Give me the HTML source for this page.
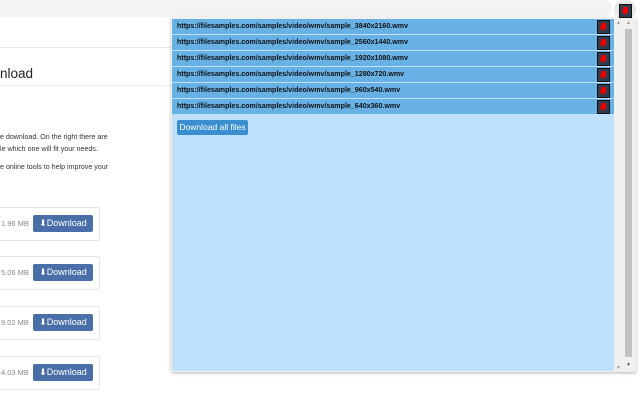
<!DOCTYPE html>
<html><head><style>
body{margin:0;width:640px;height:400px;overflow:hidden;background:#fff;font-family:"Liberation Sans",Arial,sans-serif;position:relative}
.a{position:absolute}
.ico{position:absolute;width:11px;height:12px;background:#2c3e50;border:1px solid #111}
.ico:after{content:"";position:absolute;left:3px;top:2px;width:5px;height:4px;background:#e00}
.ico:before{content:"";position:absolute;left:1px;top:6px;border-left:4.5px solid transparent;border-right:4.5px solid transparent;border-top:4px solid #e00}
.row{position:absolute;left:172px;width:442px;height:15px;background:#68b1e5;font-size:7.1px;font-weight:bold;color:#111;line-height:15px;text-indent:5px}
.box{position:absolute;left:-4px;width:102px;height:32px;border:1px solid #e6e6e6;border-radius:2px}
.sz{position:absolute;left:4px;top:11px;font-size:7.5px;color:#888}
.btn{position:absolute;left:36px;top:7px;width:60px;height:17px;background:#4a6ea8;border-radius:2px;color:#fff;font-size:9px;line-height:17px;text-align:center}
</style></head><body>
<div class="a" style="left:0;top:0;width:612px;height:17px;background:#f1f3f4;border-radius:0 9px 9px 0"></div>
<div class="a" style="left:614px;top:0;width:22px;height:19px;background:#e8e8e8;border-radius:10px"></div>
<div class="ico" style="left:619px;top:4px"></div>
<div class="a" style="left:0;top:47px;width:172px;height:1px;background:#e8e8e8"></div>
<div class="a" style="left:0;top:66px;font-size:13.5px;color:#222">nload</div>
<div class="a" style="left:0;top:85px;width:172px;height:1px;background:#eee"></div>
<div class="a" style="left:0;top:131px;font-size:7.1px;color:#333;line-height:12px">e download. On the right there are<br>le which one will fit your needs.</div>
<div class="a" style="left:0;top:163px;font-size:7.1px;color:#333">e online tools to help improve your</div>
<div class="box" style="top:207px"><span class="sz">1.96 MB</span><span class="btn">⬇Download</span></div>
<div class="box" style="top:256px"><span class="sz">5.06 MB</span><span class="btn">⬇Download</span></div>
<div class="box" style="top:306px"><span class="sz">9.02 MB</span><span class="btn">⬇Download</span></div>
<div class="box" style="top:356px"><span class="sz">4.03 MB</span><span class="btn">⬇Download</span></div>
<div class="a" style="left:171px;top:18px;width:465px;height:354px;background:#f0f0f0;box-shadow:0 1px 3px rgba(0,0,0,.3)"></div>
<div class="a" style="left:172px;top:19px;width:442px;height:352px;background:#bfe1fc"></div>
<div class="row" style="top:19px">https://filesamples.com/samples/video/wmv/sample_3840x2160.wmv</div>
<div class="row" style="top:35px">https://filesamples.com/samples/video/wmv/sample_2560x1440.wmv</div>
<div class="row" style="top:51px">https://filesamples.com/samples/video/wmv/sample_1920x1080.wmv</div>
<div class="row" style="top:67px">https://filesamples.com/samples/video/wmv/sample_1280x720.wmv</div>
<div class="row" style="top:83px">https://filesamples.com/samples/video/wmv/sample_960x540.wmv</div>
<div class="row" style="top:99px">https://filesamples.com/samples/video/wmv/sample_640x360.wmv</div>
<div class="ico" style="left:597px;top:20px"></div>
<div class="ico" style="left:597px;top:36px"></div>
<div class="ico" style="left:597px;top:52px"></div>
<div class="ico" style="left:597px;top:68px"></div>
<div class="ico" style="left:597px;top:84px"></div>
<div class="ico" style="left:597px;top:100px"></div>
<div class="a" style="left:177px;top:120px;width:71px;height:15px;background:#3a8fd1;border-radius:2px;color:#fff;font-size:8.5px;line-height:15px;text-align:center">Download all files</div>
<div class="a" style="left:625px;top:29px;width:7px;height:328px;background:#c1c1c1"></div>
<div class="a" style="left:616px;top:20px;font-size:5px;color:#999">▲</div>
<div class="a" style="left:626px;top:20px;font-size:5px;color:#999">▲</div>
<div class="a" style="left:616px;top:365px;font-size:5px;color:#999">▼</div>
<div class="a" style="left:626px;top:362px;font-size:5px;color:#555">▼</div>
</body></html>
